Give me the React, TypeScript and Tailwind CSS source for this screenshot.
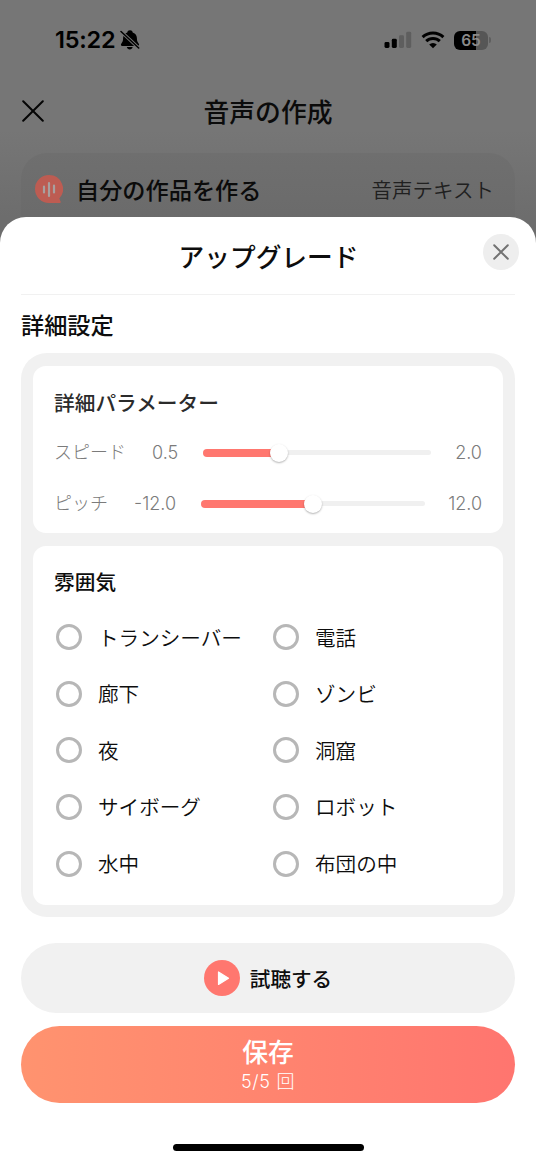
const sliders = [
  { label: "スピード", min: "0.5", max: "2.0", value: 33.3, labelClass: "w-[97px]", minClass: "w-[52px]", trackClass: "w-[228px]" },
  { label: "ピッチ", min: "-12.0", max: "12.0", value: 50, labelClass: "w-[79px]", minClass: "w-[68px]", trackClass: "w-[224px]" },
];

const moods = [
  "トランシーバー",
  "電話",
  "廊下",
  "ゾンビ",
  "夜",
  "洞窟",
  "サイボーグ",
  "ロボット",
  "水中",
  "布団の中",
];

function StatusBar() {
  return (
    <div className="flex h-20 items-center pl-[55px] pr-[45px] text-black">
      <span className="w-[61px] font-['Inter'] text-[23.500px] font-semibold leading-none tracking-[-0.2px]">15:22</span>
      <svg className="ml-[4px]" width="20" height="20" viewBox="0 0 20 20">
        <path d="M10 .2c1.500 0 2.500.9 2.700 2.200 3 1 4.200 3.200 4.200 5.700 0 3 .5 4 1.700 5.300.9.9.5 2.600-.9 2.600H2.300c-1.400 0-1.800-1.700-.9-2.600 1.200-1.300 1.700-2.300 1.700-5.300 0-2.500 1.200-4.700 4.200-5.700C7.500 1.100 8.500.2 10 .2z" fill="#000" />
        <path d="M6.800 17.100h5.900c-.4 1.500-1.400 2.300-2.950 2.300S7.200 18.600 6.800 17.100z" fill="#000" />
        <path d="M1 1.500 18.700 18" stroke="#757575" strokeWidth="3.200" />
        <path d="M1 1.500 18.700 18" stroke="#000" strokeWidth="1.500" strokeLinecap="round" />
      </svg>
      <div className="ml-auto flex items-center">
        <svg width="28" height="18" viewBox="0 0 28 18">
          <rect x="0.500" y="11" width="5" height="6" rx="1.400" fill="#000" />
          <rect x="7.800" y="7.800" width="5" height="9.200" rx="1.400" fill="#000" />
          <rect x="15" y="4.200" width="5" height="12.800" rx="1.400" fill="#5e5e5e" />
          <rect x="22.200" y="0.800" width="5" height="16.200" rx="1.400" fill="#5e5e5e" />
        </svg>
        <svg className="ml-[9px]" width="24" height="18" viewBox="0 0 24 18" fill="none" stroke="#000" strokeWidth="3">
          <path d="M1.600 6.200a15 15 0 0 1 20.800 0" />
          <path d="M5.200 10.200a9.800 9.800 0 0 1 13.600 0" />
          <path d="M12 17.300 8.200 13.500a5.400 5.400 0 0 1 7.600 0z" fill="#000" stroke="none" />
        </svg>
        <div className="ml-[9px] flex h-[19px] w-[34px] items-center justify-center rounded-[6px] bg-linear-to-r from-black from-66% to-[#565656] to-66% pt-px font-['Inter'] text-[15.500px] font-semibold leading-none text-[#8a8a8a]">
          65
        </div>
        <div className="ml-[1px] h-[6px] w-[2px] rounded-r-full bg-[#5e5e5e]" />
      </div>
    </div>
  );
}

function Slider({ value, className }: { value: number; className: string }) {
  return (
    <div className={`relative flex h-5 items-center ${className}`}>
      <div className="h-[5px] w-full rounded-full bg-[#f0f0f0]" />
      <div className="absolute left-0 h-2 rounded-full bg-[#ff776f]" style={{ width: `${value}%` }} />
      <div
        className="absolute size-[18px] -translate-x-1/2 rounded-full bg-white shadow-[0_1px_2px_rgba(0,0,0,0.3)]"
        style={{ left: `${value}%` }}
      />
    </div>
  );
}

function Backdrop() {
  return (
    <header className="h-[217px] bg-linear-to-b from-[#767676] from-60% to-[#6d6d6d] text-[#0b0b0b]">
      <StatusBar />
      <div className="flex h-[62px] items-center px-[22px]">
        <svg width="22" height="22" viewBox="0 0 22 22" fill="none" stroke="#050505" strokeWidth="2" strokeLinecap="round">
          <path d="M1.200 1.200 20.800 20.800M20.800 1.200 1.200 20.800" />
        </svg>
        <h1 className="flex-1 pr-[22px] text-center text-[25.800px] font-medium leading-none">音声の作成</h1>
      </div>
      <div className="mx-[21px] mt-[11px] flex h-[90px] rounded-[26px] bg-linear-to-b from-[#6f6f6f] to-[#696969] pl-[14px] pr-[21px] pt-[22px]">
        <svg width="28" height="28" viewBox="0 0 28 28">
          <path d="M14 0a14 14 0 1 0 0 28h10.500c1.200 0 1.500-.6 1-1.700l-1.200-2.800A14 14 0 0 0 14 0z" fill="#bd5c52" />
          <path d="M9 11.500v6M14 8v13M19 10.500v7" stroke="#a8a09f" strokeWidth="2.200" strokeLinecap="round" />
        </svg>
        <span className="ml-[13px] text-[23.200px] font-medium leading-[29px]">自分の作品を作る</span>
        <span className="ml-auto text-[20.500px] font-[350] leading-[28px] text-[#202020]">音声テキスト</span>
      </div>
    </header>
  );
}

function Parameters() {
  return (
    <section className="h-[167px] rounded-[13px] bg-white px-[21px] pt-[22px]">
      <h3 className="text-[20.700px] font-medium leading-[28px] text-[#2b2b2b]">詳細パラメーター</h3>
      <div className="mt-[11px]">
        {sliders.map((s) => (
          <div key={s.label} className="flex h-[51px] items-center text-[18px] font-light leading-none text-[#7b7b7b]">
            <span className={`pb-[3px] ${s.labelClass}`}>{s.label}</span>
            <span className={`pl-px font-['Inter'] ${s.minClass}`}>{s.min}</span>
            <Slider value={s.value} className={s.trackClass} />
            <span className="ml-auto font-['Inter']">{s.max}</span>
          </div>
        ))}
      </div>
    </section>
  );
}

function Moods() {
  return (
    <section className="mt-[13px] h-[359px] rounded-[13px] bg-white px-[21px] pt-[21px]">
      <h3 className="text-[20.700px] font-medium leading-[28px]">雰囲気</h3>
      <div className="mt-[14px] grid grid-cols-[217px_1fr] text-[20.600px] font-[350]">
        {moods.map((mood) => (
          <div key={mood} className="flex h-[56.600px] items-center gap-[16px] whitespace-nowrap pl-[2px] leading-none">
            <div className="size-[26px] shrink-0 rounded-full border-3 border-[#b7b7b7]" />
            <span className="pb-px">{mood}</span>
          </div>
        ))}
      </div>
    </section>
  );
}

export default function App() {
  return (
    <main lang="ja" className="h-[1162px] w-[536px] overflow-hidden bg-[#6d6d6d] font-['Noto_Sans_CJK_JP',sans-serif]">
      <Backdrop />

      <div className="relative h-[945px] rounded-t-[26px] bg-white px-[21px] text-[#0d0d0d]">
        <div className="flex h-[78px] items-center border-b border-[#f1f1f1]">
          <h2 className="flex-1 pl-[33px] text-center text-[25.700px] font-medium leading-none">アップグレード</h2>
          <button className="-mr-1 mb-[7px] flex size-9 items-center justify-center rounded-full bg-[#eeeeee]">
            <svg width="16" height="16" viewBox="0 0 16 16" fill="none" stroke="#727272" strokeWidth="2" strokeLinecap="round">
              <path d="M1.200 1.200 14.800 14.800M14.800 1.200 1.200 14.800" />
            </svg>
          </button>
        </div>

        <h3 className="flex h-[58px] items-center pt-[2px] text-[23.200px] font-medium leading-none">詳細設定</h3>

        <div className="h-[564px] rounded-[26px] bg-[#f1f1f1] px-3 pt-[13px]">
          <Parameters />
          <Moods />
        </div>

        <button className="mt-[26px] flex h-[70px] w-full items-center justify-center gap-[10px] rounded-full bg-[#f1f1f1] text-[20.600px] font-medium leading-none">
          <svg width="36" height="36" viewBox="0 0 36 36">
            <circle cx="18" cy="18" r="18" fill="#ff776f" />
            <path d="M14.500 12v12.500l10-6.200z" fill="#fff" stroke="#fff" strokeWidth="1.200" strokeLinejoin="round" />
          </svg>
          試聴する
        </button>

        <button className="mt-[13px] flex h-[77px] w-full flex-col items-center rounded-full bg-linear-to-r from-[#ff936f] to-[#ff756f] pt-[10px] text-white">
          <span className="text-[25.800px] font-medium leading-[30px]">保存</span>
          <span className="font-['Inter','Noto_Sans_CJK_JP',sans-serif] text-[18px] font-light leading-[32px] tracking-[0.7px]">5/5 回</span>
        </button>

        <div className="mx-auto mt-[41px] h-[7px] w-[191px] rounded-full bg-black" />
      </div>
    </main>
  );
}
